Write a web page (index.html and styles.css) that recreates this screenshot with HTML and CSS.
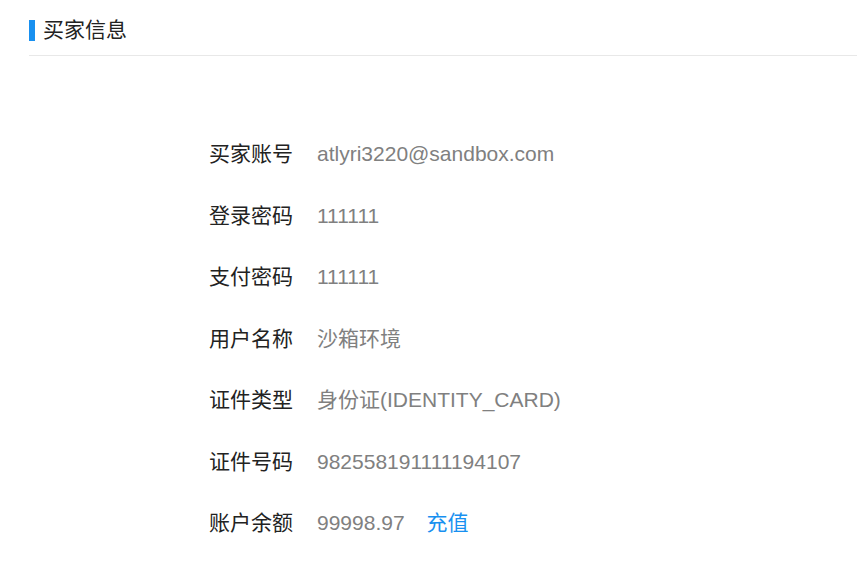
FILE: index.html
```html
<!DOCTYPE html>
<html lang="zh-CN">
<head>
<meta charset="utf-8">
<title>买家信息</title>
<link rel="stylesheet" href="styles.css">
</head>
<body>
<div class="page">
  <div class="section-head">
    <span class="bar"></span>
    <h2 class="title">买家信息</h2>
  </div>
  <div class="info">
    <div class="row"><span class="label">买家账号</span><span class="value">atlyri3220@sandbox.com</span></div>
    <div class="row"><span class="label">登录密码</span><span class="value">111111</span></div>
    <div class="row"><span class="label">支付密码</span><span class="value">111111</span></div>
    <div class="row"><span class="label">用户名称</span><span class="value">沙箱环境</span></div>
    <div class="row"><span class="label">证件类型</span><span class="value">身份证(IDENTITY_CARD)</span></div>
    <div class="row"><span class="label">证件号码</span><span class="value">982558191111194107</span></div>
    <div class="row"><span class="label">账户余额</span><span class="value">99998.97</span><a class="link" href="#">充值</a></div>
  </div>
</div>
</body>
</html>
```
FILE: styles.css
```css
html, body {
  margin: 0;
  padding: 0;
  background: #fff;
}
body {
  font-family: "Liberation Sans", "Noto Sans CJK SC", sans-serif;
  font-size: 21px;
  color: #222;
}
.page {
  padding-left: 29px;
}
.section-head {
  display: flex;
  align-items: center;
  gap: 8px;
  padding-top: 18px;
  padding-bottom: 13px;
  border-bottom: 1px solid #e8e8e8;
}
.bar {
  width: 6px;
  height: 21px;
  background: #1890f0;
}
.title {
  margin: 0;
  font-size: 21px;
  font-weight: normal;
  line-height: 24px;
  color: #222;
}
.info {
  padding-top: 67px;
  padding-left: 180px;
}
.row {
  display: flex;
  align-items: baseline;
  height: 61.5px;
  line-height: 61.5px;
}
.label {
  width: 84px;
  margin-right: 24px;
  color: #222;
  white-space: nowrap;
}
.value {
  color: #808080;
}
.link {
  margin-left: 22px;
  color: #1890f0;
  text-decoration: none;
}
```
